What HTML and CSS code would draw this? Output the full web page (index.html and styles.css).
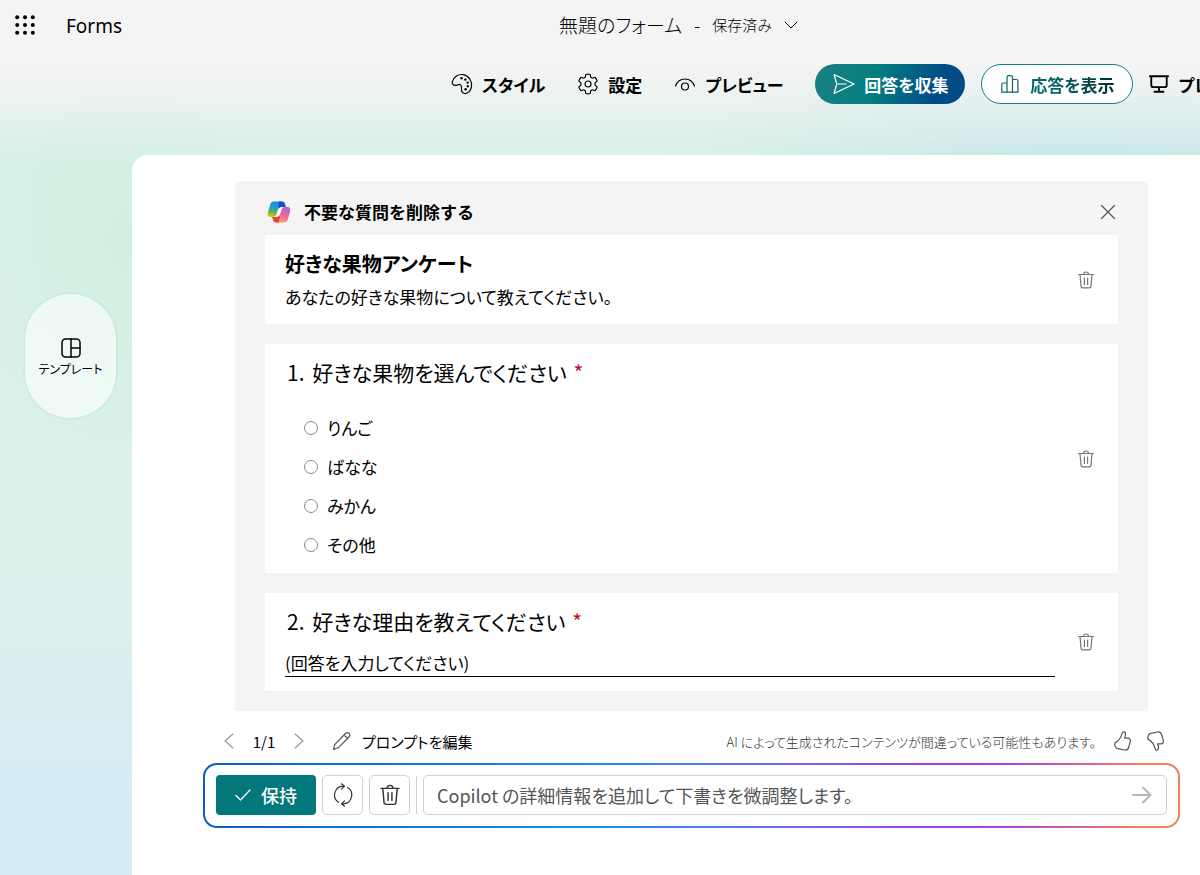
FILE: index.html
```html
<!DOCTYPE html>
<html lang="ja">
<head>
    <meta charset="UTF-8">
    <meta name="viewport" content="width=device-width, initial-scale=1.0">
    <title>無題のフォーム - Forms</title>
    <link rel="stylesheet" href="styles.css">
</head>
<body>
    <svg class="defs" aria-hidden="true">
        <symbol id="trash" viewBox="0 0 20 20">
            <path d="M2.500 4.500h15M7.500 4.500a2.500 2.500 0 0 1 5 0M4 4.500l1 11.600a1.800 1.800 0 0 0 1.800 1.700h6.400a1.800 1.800 0 0 0 1.800-1.700L16 4.500M8.400 8v6.500M11.600 8v6.500"/>
        </symbol>
        <symbol id="thumb" viewBox="0 0 20 20">
            <path d="M11.500.8c1.500 0 2.200 1.300 2 2.900-.1 1.300-.5 2.400-.9 3.500h3.300c1.700 0 2.800 1.500 2.400 3.200l-1.500 5.600c-.5 2.200-2.300 3.400-4.400 3L5.700 17.600c-1-.2-1.900-.9-2.200-1.900L2.900 14.300c-.5-1.400.1-2.800 1.500-3.400C7.100 9.700 9 6.500 10.300 1.900c.1-.7.600-1.100 1.200-1.100z"/>
        </symbol>
    </svg>

    <header class="header">
        <div class="title-bar">
            <button type="button" class="icon-button launcher" aria-label="アプリ起動ツール">
                <svg class="dots" width="20" height="20" viewBox="0 0 20 20">
                    <circle cx="2.200" cy="2.200" r="2"/><circle cx="10" cy="2.200" r="2"/><circle cx="17.800" cy="2.200" r="2"/>
                    <circle cx="2.200" cy="10" r="2"/><circle cx="10" cy="10" r="2"/><circle cx="17.800" cy="10" r="2"/>
                    <circle cx="2.200" cy="17.800" r="2"/><circle cx="10" cy="17.800" r="2"/><circle cx="17.800" cy="17.800" r="2"/>
                </svg>
            </button>
            <a class="app-name" href="#">Forms</a>
            <button type="button" class="form-name">
                <span>無題のフォーム</span>
                <span>-</span>
                <span class="saved">保存済み</span>
                <svg class="thin" width="14" height="14" viewBox="0 0 14 14"><path d="M1 5l6 6 6-6"/></svg>
            </button>
        </div>
        <nav class="toolbar">
            <button type="button" class="tool">
                <svg width="22" height="22" viewBox="0 0 22 22">
                    <path d="M1.300 8.800C2.600 3.600 7.500.7 12.500 1.700c5.600 1.200 9 6.800 8 12.200-.8 4.200-3.600 7-6.700 6.600-2.300-.3-3.400-2-3.300-4.200.1-2.400.1-4.200-1.500-4.800-1.400-.5-2.700 1-4.500.9-2.200-.1-3.700-1.500-3.200-3.600z"/>
                    <g class="fill"><circle cx="10.500" cy="5.200" r="1.200"/><circle cx="14.300" cy="6.600" r="1.200"/><circle cx="16.700" cy="9.600" r="1.200"/><circle cx="16.800" cy="13.200" r="1.200"/><circle cx="14.600" cy="16.300" r="1.200"/></g>
                </svg>
                スタイル
            </button>
            <button type="button" class="tool">
                <svg width="22" height="22" viewBox="0 0 22 22">
                    <path d="M8.800 1.500c1.500-.4 2.900-.4 4.400 0l.5 2.700 1.700 1 2.600-.9c1 1.100 1.700 2.300 2.200 3.800l-2.100 1.800v2.200l2.100 1.800c-.5 1.500-1.200 2.700-2.200 3.800l-2.600-.9-1.700 1-.5 2.700c-1.500.4-2.900.4-4.400 0l-.5-2.700-1.700-1-2.600.9c-1-1.100-1.700-2.300-2.200-3.800l2.100-1.800V9.900L1.800 8.100C2.300 6.600 3 5.400 4 4.300l2.600.9 1.700-1z"/>
                    <circle cx="11" cy="11" r="3"/>
                </svg>
                設定
            </button>
            <button type="button" class="tool">
                <svg width="22" height="22" viewBox="0 0 22 22">
                    <path d="M1.500 13C3 8.800 6.500 6 11 6s8 2.800 9.500 7"/>
                    <circle cx="11" cy="13.500" r="3.500"/>
                </svg>
                プレビュー
            </button>
            <button type="button" class="pill pill-primary">
                <svg width="24" height="22" viewBox="0 0 24 22">
                    <path d="M2 1.500L22 11 2 20.500 4.800 11zM4.800 11h9.200"/>
                </svg>
                回答を収集
            </button>
            <button type="button" class="pill pill-outline">
                <svg width="20" height="20" viewBox="0 0 20 20">
                    <path d="M1.800 18.200V10.500a1.500 1.500 0 0 1 1.500-1.500H7v9.200zM7 18.200V3.500A1.800 1.800 0 0 1 8.800 1.700h1.900a1.800 1.800 0 0 1 1.800 1.800v14.700zM12.500 5.500h3.900a1.500 1.500 0 0 1 1.500 1.500v11.200h-5.400z"/>
                </svg>
                <span>応答を表示</span>
            </button>
            <button type="button" class="tool">
                <svg class="heavy" width="20" height="20" viewBox="0 0 22 22">
                    <path d="M1 2.500h20M2.500 2.500v9.500a2.500 2.500 0 0 0 2.500 2.500h12a2.500 2.500 0 0 0 2.500-2.500V2.500M11 14.500v5M6 19.500h10"/>
                </svg>
                プレゼンテーション
            </button>
        </nav>
    </header>

    <div class="workspace">
        <aside class="sidebar">
            <button type="button" class="template-button">
                <svg width="20" height="20" viewBox="0 0 20 20">
                    <rect x="1" y="1" width="18" height="18" rx="3.500"/>
                    <path d="M10 1v18M10 10h9"/>
                </svg>
                テンプレート
            </button>
        </aside>

        <main class="canvas">
            <section class="draft">
                <div class="draft-head">
                    <svg class="copilot" width="24" height="22" viewBox="0 0 24 22">
                        <defs>
                            <linearGradient id="cool" x1="0.600" y1="0" x2="0.400" y2="1">
                                <stop offset="0" stop-color="#1489f0"/>
                                <stop offset="0.400" stop-color="#1f9fd0"/>
                                <stop offset="0.700" stop-color="#5cb54c"/>
                                <stop offset="1" stop-color="#e8c414"/>
                            </linearGradient>
                            <linearGradient id="warm" x1="0.700" y1="0" x2="0.300" y2="1">
                                <stop offset="0" stop-color="#a865ea"/>
                                <stop offset="0.500" stop-color="#f0609a"/>
                                <stop offset="1" stop-color="#ffa45c"/>
                            </linearGradient>
                        </defs>
                        <path fill="url(#cool)" d="M7 .5h8c-1 0-1.900 1-2.400 2.700L9.800 12.500C9.100 14.800 8 16 5.800 16H3.600C1 16 .2 14 .8 11.700L3.200 3.700C3.800 1.600 5.200.5 7 .5z"/>
                        <path fill="url(#warm)" d="M17 21.500H9c1 0 1.900-1 2.400-2.700l2.800-9.300C14.900 7.200 16 6 18.200 6h2.200c2.600 0 3.400 2 2.800 4.300l-2.400 8c-.6 2.100-2 3.200-3.800 3.200z"/>
                        <path fill="#1450c8" d="M12 .5h3.200c1.500 0 2.300.9 2.700 2.200l1 3.300h-3.100c-2.300 0-3.200.5-4.100 2L11 5.500l1-3.500z"/>
                        <path fill="#e0443c" d="M12 21.500H8.800c-1.500 0-2.300-.9-2.700-2.200l-1-3.300h3.100c2.300 0 3.200-.5 4.100-2l.7 2.500-1 3.500z"/>
                        <path fill="#fff" d="M15.800 6c-1.100.6-1.500 2-2 3.700l-1 3.300c-.6 1.800-1.800 3-4.500 3 1.100-.6 1.500-2 2-3.700l1-3.300c.6-1.800 1.800-3 4.500-3z"/>
                    </svg>
                    <h2>不要な質問を削除する</h2>
                    <button type="button" class="icon-button" aria-label="閉じる">
                        <svg width="16" height="16" viewBox="0 0 16 16"><path d="M1.500 1.500l13 13M14.500 1.500l-13 13"/></svg>
                    </button>
                </div>

                <article class="card">
                    <div class="card-body">
                        <h1>好きな果物アンケート</h1>
                        <p class="description">あなたの好きな果物について教えてください。</p>
                    </div>
                    <button type="button" class="icon-button" aria-label="削除"><svg width="20" height="20"><use href="#trash"/></svg></button>
                </article>

                <article class="card">
                    <fieldset class="card-body">
                        <legend class="question"><span class="number">1.</span> 好きな果物を選んでください <span class="required">*</span></legend>
                        <div class="options">
                            <label><input type="radio" name="fruit"> りんご</label>
                            <label><input type="radio" name="fruit"> ばなな</label>
                            <label><input type="radio" name="fruit"> みかん</label>
                            <label><input type="radio" name="fruit"> その他</label>
                        </div>
                    </fieldset>
                    <button type="button" class="icon-button" aria-label="削除"><svg width="20" height="20"><use href="#trash"/></svg></button>
                </article>

                <article class="card">
                    <div class="card-body">
                        <label class="question" for="reason"><span class="number">2.</span> 好きな理由を教えてください <span class="required">*</span></label>
                        <input class="answer" type="text" id="reason" placeholder="(回答を入力してください)">
                    </div>
                    <button type="button" class="icon-button" aria-label="削除"><svg width="20" height="20"><use href="#trash"/></svg></button>
                </article>
            </section>

            <div class="status">
                <button type="button" class="icon-button pager" aria-label="前へ"><svg width="16" height="16" viewBox="0 0 16 16"><path d="M12 1L4 8l8 7"/></svg></button>
                <span class="page-count">1/1</span>
                <button type="button" class="icon-button pager" aria-label="次へ"><svg width="16" height="16" viewBox="0 0 16 16"><path d="M4 1l8 7-8 7"/></svg></button>
                <button type="button" class="edit-prompt">
                    <svg width="20" height="20" viewBox="0 0 20 20">
                        <path d="M13.500 2.500c1.200-1.200 2.700-1.200 3.700-.2s1 2.500-.2 3.700L6.200 16.800 1.500 18.500l1.400-5.200zM12 4l3.600 3.600"/>
                    </svg>
                    プロンプトを編集
                </button>
                <span class="notice">AI によって生成されたコンテンツが間違っている可能性もあります。</span>
                <button type="button" class="icon-button rate" aria-label="高く評価"><svg width="20" height="20"><use href="#thumb"/></svg></button>
                <button type="button" class="icon-button rate rate-down" aria-label="低く評価"><svg width="20" height="20"><use href="#thumb"/></svg></button>
            </div>

            <form class="composer">
                <button type="button" class="keep">
                    <svg width="16" height="14" viewBox="0 0 16 14"><path d="M1 7.500L5.500 12 15 2"/></svg>
                    保持
                </button>
                <button type="button" class="square" aria-label="再生成">
                    <svg width="22" height="24" viewBox="0 0 22 24">
                        <path d="M6.500 19.300A8.800 8.800 0 0 1 11 3.200h1.500M9.500.8L12.500 3.200 9.500 6.200M15.500 4.500A8.800 8.800 0 0 1 11 20.800H9.500M12.500 17.800L9.500 20.800l3 2.400"/>
                    </svg>
                </button>
                <button type="button" class="square" aria-label="破棄">
                    <svg width="24" height="24"><use href="#trash"/></svg>
                </button>
                <span class="divider"></span>
                <div class="prompt">
                    <input type="text" aria-label="プロンプト" placeholder="Copilot の詳細情報を追加して下書きを微調整します。">
                    <button type="submit" class="icon-button send" aria-label="送信">
                        <svg width="20" height="20" viewBox="0 0 20 20"><path d="M1 10h17M11 2.500l7.500 7.500-7.500 7.500"/></svg>
                    </button>
                </div>
            </form>
        </main>
    </div>
</body>
</html>
```
FILE: styles.css
```css
* {
    box-sizing: border-box;
}

body {
    margin: 0;
    min-height: 100vh;
    display: flex;
    flex-direction: column;
    color: #000;
    font-family: "Noto Sans CJK JP", sans-serif;
    font-feature-settings: "palt";
    font-size: 17px;
    background:
        linear-gradient(#f4f4f4 65px, rgba(244, 244, 244, 0) 165px),
        radial-gradient(ellipse 420px 160px at 1080px 170px, #c0e5e8, rgba(192, 229, 232, 0)),
        radial-gradient(ellipse 160px 220px at 130px 240px, #d0efe1, rgba(208, 239, 225, 0)),
        linear-gradient(#d6f1e6 0, #daf2e8 450px, #dbf1ee 620px, #d4ecf5 800px);
}

button,
input {
    margin: 0;
    color: inherit;
    font-family: inherit;
    font-size: inherit;
    font-feature-settings: inherit;
}

button {
    display: inline-flex;
    align-items: center;
    flex-shrink: 0;
    padding: 0;
    border: none;
    background: none;
    white-space: nowrap;
    cursor: pointer;
}

svg {
    display: block;
    flex-shrink: 0;
    fill: none;
    stroke: currentColor;
    stroke-width: 1.2;
    stroke-linecap: round;
    stroke-linejoin: round;
}

.defs {
    display: none;
}

.fill,
.dots {
    fill: currentColor;
    stroke: none;
}

.heavy {
    stroke-width: 2;
}

.thin {
    stroke-width: 1;
}

.icon-button {
    justify-content: center;
    width: 24px;
    height: 24px;
    color: #555;
}

/* Header */
.header {
    height: 155px;
}

.title-bar {
    display: flex;
    align-items: center;
    height: 50px;
    padding-left: 13px;
}

.launcher {
    color: #000;
}

.app-name {
    width: 522px;
    padding: 2px 0 0 29px;
    color: #000;
    font-family: "Noto Sans", sans-serif;
    font-size: 19px;
    text-decoration: none;
}

.form-name {
    gap: 12px;
    padding-bottom: 2px;
    font-size: 19px;
    font-weight: 300;
}

.saved {
    font-size: 15px;
}

.toolbar {
    display: flex;
    align-items: center;
    height: 40px;
    margin-top: 14px;
    padding-left: 451px;
    overflow: hidden;
}

.tool {
    gap: 9px;
    margin-right: 32px;
    font-weight: 700;
}

.pill {
    justify-content: center;
    gap: 8px;
    height: 40px;
    margin-right: 16px;
    border-radius: 20px;
    font-weight: 700;
}

.pill-primary {
    width: 150px;
    color: #fff;
    background: linear-gradient(110deg, #1b8085 0, #057e80 40%, #004c87 80%);
}

.pill-outline {
    width: 152px;
    gap: 10px;
    border: 1px solid #128085;
    background: #fff;
    color: #05666b;
}

.pill-outline span {
    color: transparent;
    background: linear-gradient(90deg, #05666b 30%, #042f32);
    -webkit-background-clip: text;
    background-clip: text;
}

/* Left column */
.workspace {
    display: flex;
    flex: 1;
}

.sidebar {
    width: 132px;
    flex-shrink: 0;
    padding: 139px 16px 0 25px;
}

.template-button {
    flex-direction: column;
    justify-content: center;
    gap: 2px;
    width: 100%;
    height: 124px;
    padding-top: 4px;
    border-radius: 46px;
    background: rgba(255, 255, 255, 0.6);
    box-shadow: 0 0 3px rgba(60, 140, 110, 0.2);
    font-size: 12px;
    line-height: 18px;
}

.template-button svg {
    stroke-width: 1.5;
}

/* Form draft */
.canvas {
    flex: 1;
    min-width: 0;
    padding: 26px 20px 47px 71px;
    border-radius: 16px 0 0 0;
    background: #fff;
}

.draft {
    margin: 0 32px;
    padding: 0 30px 20px;
    border-radius: 5px 5px 0 0;
    background: #f4f4f4;
}

.draft-head {
    display: flex;
    align-items: center;
    height: 54px;
    padding: 8px 0 0 2px;
}

.copilot {
    stroke: none;
}

.draft-head h2 {
    flex: 1;
    margin: 0 0 0 13px;
    font-size: 17px;
    line-height: 24px;
    font-feature-settings: normal;
}

.draft-head .icon-button {
    margin-right: -2px;
}

.card {
    display: flex;
    align-items: center;
    gap: 19px;
    padding: 14px 20px;
    background: #fff;
}

.card .icon-button {
    color: #777;
}

.card + .card {
    margin-top: 20px;
}

.card-body {
    flex: 1;
    min-width: 0;
    margin: 0;
    padding: 0;
    border: none;
}

.card h1 {
    margin: 0;
    font-size: 20px;
    line-height: 30px;
}

.description {
    margin: 6px 0 1px;
    line-height: 24px;
}

.question {
    display: block;
    padding: 0;
    font-size: 21px;
    line-height: 28px;
}

.number {
    margin: 0 3px 0 2px;
}

.required {
    margin-left: 2px;
    color: #c50f1f;
}

.options {
    display: grid;
    gap: 15px;
    padding: 30px 0 2px 19px;
}

.options label {
    display: flex;
    align-items: center;
    gap: 9px;
    line-height: 24px;
}

.options input {
    appearance: none;
    width: 14px;
    height: 14px;
    border: 1px solid #8a8a8a;
    border-radius: 50%;
    background: #fff;
}

.options input:checked {
    border: 4px solid #03787c;
}

.answer {
    display: block;
    width: 100%;
    height: 28px;
    margin-top: 14px;
    padding: 0;
    border: none;
    border-bottom: 1px solid #000;
}

.answer::placeholder {
    color: #000;
}

/* Pager and notice */
.status {
    display: flex;
    align-items: center;
    height: 52px;
    padding: 8px 13px 0 14px;
    font-size: 15px;
}

.pager {
    color: #999;
}

.page-count {
    width: 46px;
    text-align: center;
}

.edit-prompt {
    gap: 10px;
    margin-left: 21px;
}

.edit-prompt svg {
    color: #555;
}

.notice {
    margin-left: auto;
    margin-right: 14px;
    color: #333;
    font-size: 13px;
    font-weight: 300;
}

.rate + .rate {
    margin-left: 9px;
}

.rate-down svg {
    transform: scaleY(-1);
}

/* Copilot input bar */
.composer {
    display: flex;
    align-items: center;
    gap: 6px;
    padding: 10px 11px 11px;
    border: 2px solid transparent;
    border-radius: 14px;
    background:
        linear-gradient(#fff, #fff) padding-box,
        linear-gradient(90deg, #0c5cc4 0, #1a8fe6 40%, #6b6ff0 58%, #a23ce0 75%, #b044d8 83%, #f0805a 96%) border-box;
}

.keep {
    justify-content: center;
    gap: 10px;
    width: 100px;
    height: 40px;
    border-radius: 4px;
    background: #03787c;
    color: #fff;
    font-size: 18px;
    font-weight: 500;
}

.square {
    justify-content: center;
    width: 41px;
    height: 40px;
    border: 1px solid #d1d1d1;
    border-radius: 5px;
    color: #333;
}

.divider {
    width: 1px;
    height: 38px;
    background: #d1d1d1;
}

.prompt {
    display: flex;
    align-items: center;
    flex: 1;
    height: 40px;
    padding: 0 12px 0 13px;
    border: 1px solid #d1d1d1;
    border-radius: 5px;
}

.prompt input {
    flex: 1;
    min-width: 0;
    padding: 0;
    border: none;
    outline: none;
    font-size: 18px;
}

.prompt input::placeholder {
    color: #555;
}

.send {
    color: #b5b5b5;
}

.send svg {
    stroke-width: 2;
}
```
